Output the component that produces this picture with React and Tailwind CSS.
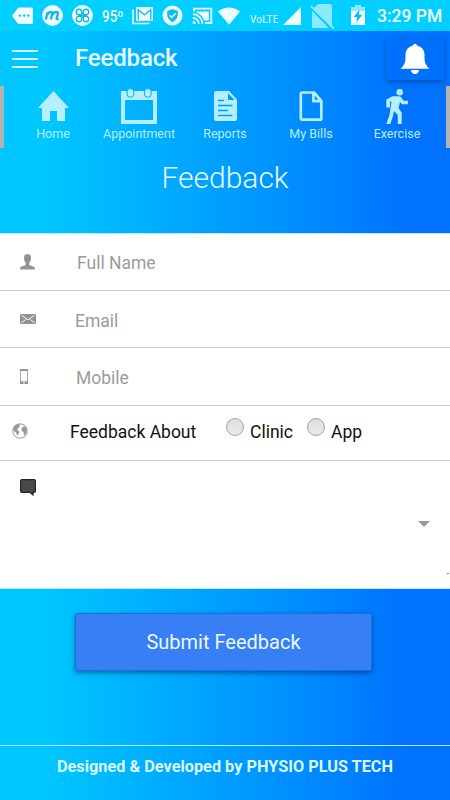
import React from "react";

function StatusBar() {
  return (
    <div className="flex h-[31px] w-full shrink-0 items-start bg-[#00cfff] pl-[12px] text-[#effcff]">
      <svg className="mt-[7px] h-[18px] w-[21px] shrink-0" viewBox="0 0 21 18" fill="currentColor">
        <path d="M0 8.8 5.5 1.4Q6.2.6 7.2.6H19.5Q21 .6 21 2V15.6Q21 17 19.5 17H7.2Q6.2 17 5.5 16.2Z" />
        <g fill="#00bfee"><circle cx="8" cy="8.6" r="1.2" /><circle cx="12.2" cy="8.6" r="1.2" /><circle cx="16.4" cy="8.6" r="1.2" /></g>
      </svg>
      <svg className="ml-[9px] mt-[5px] h-[21px] w-[21px] shrink-0" viewBox="0 0 21 21">
        <circle cx="10.5" cy="10.5" r="10.4" fill="currentColor" />
        <path d="M3.8 14.5 5.7 7.2M4.8 10.4Q7 6.2 9.7 7.1 10.8 7.8 9.8 10.5L8.8 14.5M9.9 10.4Q12.4 6.2 15.3 7.1 16.5 7.9 15.5 10.5L14.6 13.2Q14.4 14.5 16.6 13.8" fill="none" stroke="#12b8e8" strokeWidth="2.4" />
      </svg>
      <svg className="ml-[9px] mt-[5px] h-[21px] w-[21px] shrink-0" viewBox="0 0 21 21">
        <circle cx="10.5" cy="10.5" r="10.4" fill="currentColor" />
        <g fill="none" stroke="#12b8e8" strokeWidth="1.4">
          <path d="M9.7 9.7H7A2.7 2.7 0 1 1 9.7 7ZM11.3 9.7V7A2.7 2.7 0 1 1 14 9.7ZM9.7 11.3V14A2.7 2.7 0 1 1 7 11.3ZM11.3 11.3H14A2.7 2.7 0 1 1 11.3 14Z" />
        </g>
      </svg>
      <span className="ml-[9px] mt-[7px] w-[22px] origin-left scale-x-[.84] whitespace-nowrap text-[16px] font-medium leading-[19px]">95º</span>
      <svg className="ml-[8px] mt-[7px] h-[18px] w-[21px] shrink-0" viewBox="0 0 21 18">
        <path d="M1 2.5V16.5H17.5" fill="none" stroke="currentColor" strokeWidth="1.6" />
        <rect x="4" y="0" width="17" height="13.7" rx="1" fill="currentColor" />
        <path d="M6.2 12.8V2.8L12.5 7.8 18.8 2.8V12.8" fill="none" stroke="#10bbed" strokeWidth="1.4" />
      </svg>
      <svg className="ml-[9px] mt-[5px] h-[21px] w-[21px] shrink-0" viewBox="0 0 21 21">
        <circle cx="10.5" cy="10.5" r="10" fill="currentColor" />
        <path d="M10.5 4 15.8 6V10Q15.5 14.5 10.5 17.2 5.5 14.5 5.2 10V6Z" fill="#10bbed" />
        <path d="m7.7 10.2 2.1 2.1 3.8-3.7" stroke="#effcff" strokeWidth="1.4" fill="none" />
      </svg>
      <svg className="ml-[9px] mt-[7px] h-[18px] w-[21px] shrink-0" viewBox="0 0 21 18" fill="none" stroke="currentColor" strokeWidth="1.8">
        <path d="M1.9 4.5V1.7H19.3V16H12.8" />
        <path d="M4.5 4.4H16.8V13.5H12Q10 7 4.5 6Z" fill="currentColor" stroke="none" />
        <path d="M.8 7.2A9.5 9.5 0 0 1 10.3 16.8M.8 11A6 6 0 0 1 6.8 16.8" />
        <path d="M.8 13.8A3 3 0 0 1 3.8 16.8H.8Z" fill="currentColor" stroke="none" />
      </svg>
      <svg className="ml-[4px] mt-[7px] h-[18px] w-[24px] shrink-0" viewBox="0 0 24 18" fill="currentColor">
        <path d="M12 17.8 1 4.5Q12-3.5 23 4.5Z" />
      </svg>
      <span className="ml-[9px] mt-[14px] w-[27px] whitespace-nowrap text-[10px] leading-[12px] tracking-[0.2px]">VoLTE</span>
      <svg className="ml-[6px] mt-[7px] h-[18px] w-[18px] shrink-0" viewBox="0 0 18 18" fill="currentColor"><path d="M0 18 18 0V18Z" /></svg>
      <svg className="ml-[9px] mt-[3px] h-[26px] w-[25px] shrink-0" viewBox="0 0 25 26" fill="none">
        <path d="M8 1H20Q22 1 22 3V25H2V7Z" fill="#8ce9ff" />
        <path d="M.8 4.4 22.5 26.7" stroke="#00cfff" strokeWidth="3" />
        <path d="M.8 3 23.8 25.5" stroke="#8ce9ff" strokeWidth="1.8" />
      </svg>
      <svg className="ml-[16px] mt-[5px] h-[20px] w-[14px] shrink-0" viewBox="0 0 14 20">
        <path d="M4 0H10V2H14V7H0V2H4Z" fill="#8ce9ff" />
        <path d="M0 6H14V20H0Z" fill="currentColor" />
        <path d="M8.6 4.5 2.8 12H6.2L5.3 17.6 11.2 9.8H7.7Z" fill="#08b9ea" />
      </svg>
      <span className="ml-[12px] mt-[6px] whitespace-nowrap text-[17.5px] font-medium leading-[21px]">3:29 PM</span>
    </div>
  );
}

const tabs = [
  {
    name: "Home",
    icon: <path fill="currentColor" d="M15.5 2 31 19H27V32H19V22H12V32H4V19H0Z" />,
    box: "0 0 31 34",
    size: "h-[34px] w-[31px]",
  },
  {
    name: "Appointment",
    icon: (
      <g>
        <path fill="currentColor" fillRule="evenodd" d="M0 2H36V35H0ZM4 11V31H32V11Z" />
        <g fill="#b4efff" stroke="#00aff4" strokeWidth="1"><rect x="6" y="-.5" width="6.8" height="8.8" rx="3.4" /><rect x="23.4" y="-.5" width="6.8" height="8.8" rx="3.4" /></g>
      </g>
    ),
    box: "0 -1 36 37",
    size: "-mt-px h-[37px] w-[36px]",
  },
  {
    name: "Reports",
    icon: (
      <g>
        <path fill="currentColor" d="M3 2H16L24 10.5V30Q24 32 22 32H3Q1 32 1 30V4Q1 2 3 2Z" />
        <path fill="#009efa" d="M15 4.3 21.7 11H15Z" />
        <path fill="none" stroke="#009efa" strokeWidth="1.4" d="M5 11.5H11M5 16.5H19.5M5 21.5H15M5 26.5H19.5" />
      </g>
    ),
    box: "0 0 25 34",
    size: "h-[34px] w-[25px]",
  },
  {
    name: "My Bills",
    icon: <path fill="none" stroke="currentColor" strokeWidth="2.7" strokeLinejoin="round" d="M3 3.5H15L22.3 12V29.5Q22.3 30.7 21 30.7H3Q1.8 30.7 1.8 29.5V4.7Q1.8 3.5 3 3.5ZM14.4 4V12.2H22" />,
    box: "0 0 24 35",
    size: "h-[35px] w-[24px]",
  },
  {
    name: "Exercise",
    icon: (
      <g>
        <circle cx="13.7" cy="3.2" r="3.3" fill="currentColor" />
        <path fill="currentColor" d="M6.5 7.2H13Q15.5 7.2 16 9.5L17.5 11.8H22V15.2H16L14 13 12.5 19 15.7 23.5V35H11.8V26L8 22 6.8 27.5 4.3 35H.3L3.5 26 5.5 12 4 13V18.5H.3V10.5Z" />
      </g>
    ),
    box: "0 0 22 36",
    size: "h-[36px] w-[22px]",
  },
];

function Field({ children, icon, height }) {
  return (
    <div className={`flex w-full shrink-0 items-start border-b border-[#cccccc] ${height}`}>
      {icon}
      {children}
    </div>
  );
}

function Radio({ children, className }) {
  return (
    <label className={`flex items-start ${className}`}>
      <span className="mt-[12px] h-[18px] w-[18px] shrink-0 rounded-full border border-[#a3a3a3] bg-linear-to-b from-[#dedede] to-[#e9e9e9]" />
      <span className="ml-[6px] mt-[16px] whitespace-nowrap leading-[21px]">{children}</span>
    </label>
  );
}

export default function App() {
  return (
    <main className="flex h-[800px] w-[450px] flex-col overflow-hidden bg-linear-to-r from-[#00c6ff] from-10% to-[#0072ff] to-90% font-['Roboto',sans-serif]">
      <StatusBar />
      <header className="flex h-[55px] shrink-0 items-start text-[#e6fbff]">
        <button className="ml-[12px] mt-[19px] flex w-[26px] flex-col gap-[6px]" aria-label="Menu">
          <span className="h-[2px] w-full bg-[#d9f8ff]" />
          <span className="h-[2px] w-full bg-[#d9f8ff]" />
          <span className="h-[2px] w-full bg-[#d9f8ff]" />
        </button>
        <h1 className="ml-[37px] mt-[12px] text-[24px] font-medium leading-[30px] tracking-[-0.15px]">Feedback</h1>
        <button className="ml-auto mr-[6px] mt-[8px] flex h-[41px] w-[58px] justify-center rounded-[2px] bg-[#0071ff] shadow-[0_2px_5px_rgba(0,0,0,0.3)]" aria-label="Notifications">
          <svg className="mt-[4px] h-[32px] w-[30px]" viewBox="0 0 30 32" fill="white">
            <path d="M13 2.4Q13 .7 15 .7T17 2.4Q24 4 24.5 11V16Q24.8 22 29.5 25.7H.5Q5.2 22 5.5 16V11Q6 4 13 2.4ZM11 27H19Q18.5 31 15 31T11 27Z" />
          </svg>
        </button>
      </header>
      <nav className="flex h-[62px] shrink-0 justify-center border-x-4 border-[#b3b3b3] text-[#b4efff]">
        {tabs.map((t) => (
          <a key={t.name} className="flex w-[86px] shrink-0 flex-col items-center">
            <span className="flex h-[40px] items-start pt-[3px]">
              <svg className={t.size} viewBox={t.box}>{t.icon}</svg>
            </span>
            <span className="whitespace-nowrap text-[12.5px] leading-[15px]">{t.name}</span>
          </a>
        ))}
      </nav>
      <h2 className="mt-[12px] h-[73px] shrink-0 text-center text-[30px] font-light leading-[36px] text-[#e3fbff]">Feedback</h2>
      <form className="flex h-[356px] shrink-0 flex-col border-b border-[#bceaff] bg-white text-[17.5px] text-[#9b9b9b]">
        <Field height="h-[58px] border-t border-t-[#bdeaff]" icon={
          <svg className="ml-[20px] mt-[20px] h-[16px] w-[15px] shrink-0" viewBox="0 0 15 16" fill="#929292"><path d="M7.5 0Q11 0 11 4.2 11 7.5 9.3 8.7V11L14 12.7Q15 13.2 15 15.6H0Q0 13.2 1 12.7L5.7 11V8.7Q4 7.5 4 4.2 4 0 7.5 0Z" /></svg>
        }><span className="ml-[42px] mt-[19px] leading-[21px]">Full Name</span></Field>
        <Field height="h-[57px]" icon={
          <svg className="ml-[20px] mt-[23px] h-[10px] w-[16px] shrink-0" viewBox="0 0 16 10"><rect width="16" height="10" rx=".8" fill="#929292" /><path d="m1.5 1.2 6.5 4.6 6.5-4.6M1.5 8.7l4.2-3.2m8.8 3.2-4.2-3.2" fill="none" stroke="#fff" strokeWidth="1" /></svg>
        }><span className="ml-[39px] mt-[20px] leading-[21px]">Email</span></Field>
        <Field height="h-[58px]" icon={
          <svg className="ml-[20px] mt-[21px] h-[15px] w-[8px] shrink-0" viewBox="0 0 8 15"><rect width="8" height="15" rx="1" fill="#929292" /><path fill="white" d="M.8 2H7.2V12.3H.8ZM3 13H5V14.2H3Z" /></svg>
        }><span className="ml-[48px] mt-[20px] leading-[21px]">Mobile</span></Field>
        <Field height="h-[55px]" icon={
          <svg className="ml-[12px] mt-[17px] h-[16px] w-[16px] shrink-0" viewBox="0 0 16 16"><circle cx="8" cy="8" r="7.2" fill="white" stroke="#aaa" strokeWidth="1.2" /><path fill="#999" d="M2 4 5 1.4 8.5 1 7.2 2.7 8 3.6 5.8 5.2 5.4 7 7.5 8.8 6.6 11 5.2 12.6 4 9.5 1.3 7.6ZM10 4 13.5 3.5 15 7 13.8 11 12 12.6 11.6 9.2 9.3 7.6Z" /></svg>
        }>
          <span className="ml-[42px] mt-[16px] w-[126px] whitespace-nowrap leading-[21px] text-[#111]">Feedback About</span>
          <Radio className="ml-[30px] w-[67px] text-[#111]">Clinic</Radio>
          <Radio className="ml-[14px] text-[#111]">App</Radio>
        </Field>
        <div className="flex flex-1 items-start">
          <svg className="ml-[20px] mt-[18px] h-[17px] w-[16px] shrink-0" viewBox="0 0 16 17"><path d="M2 .7H14Q15.4.7 15.4 2V12Q15.4 13.3 14 13.3H13V16L10 13.3H2Q.6 13.3.6 12V2Q.6.7 2 .7Z" fill="#494949" stroke="#222" strokeWidth="1.2" /></svg>
          <svg className="ml-auto mr-[20px] mt-[60px] h-[6px] w-[12px]" viewBox="0 0 12 6"><path d="M0 0H12L6 6Z" fill="#999" /></svg>
          <span className="-ml-[3px] mr-px mt-[112px] h-px w-[2px] bg-[#888]" />
        </div>
      </form>
      <button className="ml-[75px] mt-[24px] h-[58px] w-[297px] shrink-0 rounded-[2px] border border-[#136fea] bg-[#387ef5] text-[20px] leading-[24px] text-[#e8fbff] shadow-[0_2px_5px_rgba(0,0,0,0.4)]">Submit Feedback</button>
      <footer className="mt-auto h-[55px] shrink-0 border-t border-[#b3efff] pt-[11px] text-center text-[16.3px] font-bold leading-[20px] text-[#d8faff]">
        Designed &amp; Developed by PHYSIO PLUS TECH
      </footer>
    </main>
  );
}
